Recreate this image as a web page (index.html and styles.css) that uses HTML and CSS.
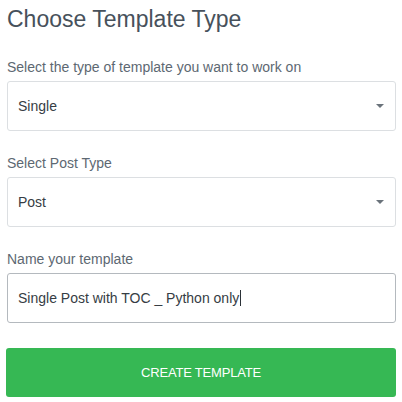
FILE: index.html
```html
<!DOCTYPE html>
<html>
<head>
<meta charset="utf-8">
<link rel="stylesheet" href="styles.css">
</head>
<body>
<div class="panel">
  <h1 class="title">Choose Template Type</h1>
  <div class="field">
    <label class="label">Select the type of template you want to work on</label>
    <div class="box select"><span class="value">Single</span><span class="caret"></span></div>
  </div>
  <div class="field">
    <label class="label">Select Post Type</label>
    <div class="box select"><span class="value">Post</span><span class="caret"></span></div>
  </div>
  <div class="field">
    <label class="label">Name your template</label>
    <div class="box input focused"><span class="value">Single Post with TOC _ Python only</span><span class="cursor"></span></div>
  </div>
  <button class="btn">CREATE TEMPLATE</button>
</div>
</body>
</html>
```
FILE: styles.css
```css
html, body {
  margin: 0;
  padding: 0;
  background: #ffffff;
}
body {
  font-family: "Liberation Sans", Arial, sans-serif;
}
.panel {
  width: 389px;
  padding: 6px 0 0 7px;
  display: flex;
  flex-direction: column;
}
.title {
  margin: 0;
  font-size: 23px;
  font-weight: 400;
  line-height: 26px;
  color: #47515b;
  height: 53px;
}
.field {
  display: flex;
  flex-direction: column;
  margin-bottom: 24px;
}
.field:last-of-type {
  margin-bottom: 25px;
}
.label {
  font-size: 14px;
  line-height: 17px;
  color: #5d6872;
  margin-bottom: 5px;
}
.box {
  box-sizing: border-box;
  height: 50px;
  border: 1px solid #dcdfe2;
  border-radius: 3px;
  display: flex;
  align-items: center;
  padding: 0 11px 0 10px;
  font-size: 14px;
  color: #363d44;
}
.box.focused {
  border-color: #b4b9be;
}
.value {
  white-space: nowrap;
}
.select .value {
  flex: 1;
}
.caret {
  width: 0;
  height: 0;
  border-left: 4px solid transparent;
  border-right: 4px solid transparent;
  border-top: 4px solid #6a737b;
}
.cursor {
  width: 1px;
  height: 16px;
  background: #2b3137;
  margin-left: 1px;
}
.btn {
  height: 49px;
  width: 390px;
  margin-left: -1px;
  border: none;
  border-radius: 3px;
  background: #36b854;
  color: #ffffff;
  font-family: "Liberation Sans", Arial, sans-serif;
  font-size: 13px;
  letter-spacing: -0.2px;
  padding: 0;
}
```
